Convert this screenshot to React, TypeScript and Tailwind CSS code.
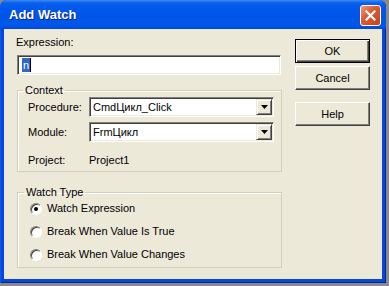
import type { ReactNode } from "react";

const sunken =
  "border border-t-[#808080] border-l-[#808080] border-b-white border-r-white shadow-[inset_1px_1px_0_#404040,inset_-1px_-1px_0_#ECE9D8]";

const ComboBox = ({ value }: { value: string }) => (
  <div className={`flex h-[20px] w-[185px] bg-white ${sunken}`}>
    <div className="flex flex-1 items-center pl-[3px] leading-[13px]">{value}</div>
    <div className="m-[1px] flex w-[16px] items-center justify-center border border-t-[#ECE9D8] border-l-[#ECE9D8] border-b-[#404040] border-r-[#404040] bg-[#ECE9D8] shadow-[inset_1px_1px_0_#fff,inset_-1px_-1px_0_#808080]">
      <svg width="7" height="4" viewBox="0 0 7 4">
        <path d="M0 0h7L3.5 4z" fill="#000" />
      </svg>
    </div>
  </div>
);

const Radio = ({ checked, children }: { checked?: boolean; children: ReactNode }) => (
  <div className="flex h-[23px] items-center pl-[12px]">
    <span className="flex h-[12px] w-[12px] items-center justify-center rounded-full border border-t-[#808080] border-l-[#808080] border-b-white border-r-white bg-white shadow-[inset_1px_1px_0_#404040]">
      {checked && <span className="h-[4px] w-[4px] rounded-full bg-black" />}
    </span>
    <span className="ml-[5px] leading-[13px]">{children}</span>
  </div>
);

const Button = ({ label, isDefault }: { label: string; isDefault?: boolean }) => (
  <button
    className={`flex h-[24px] w-[75px] items-center justify-center bg-[#ECE9D8] leading-[13px] ${
      isDefault
        ? "border border-black shadow-[inset_1px_1px_0_#fff,inset_-1px_-1px_0_#404040,inset_-2px_-2px_0_#808080]"
        : "border border-t-white border-l-white border-b-[#404040] border-r-[#404040] shadow-[inset_-1px_-1px_0_#808080]"
    }`}
  >
    {label}
  </button>
);

export default function App() {
  return (
    <div className="h-[286px] w-[389px] overflow-hidden bg-[#8a8a8a] font-['Liberation_Sans',Arial,sans-serif] text-[11px] text-black">
      <div className="flex h-[283px] w-[386px] flex-col overflow-hidden rounded-t-[7px] bg-[#0847D9] shadow-[inset_1px_0_0_#0A5CF0,inset_-1px_-1px_0_#0025A0]">
        {/* Title bar */}
        <div className="flex h-[29px] shrink-0 items-center justify-between bg-[linear-gradient(to_bottom,#3C8CF5_0px,#0A5FEA_3px,#0058EE_8px,#0055E5_55%,#0059EC_85%,#0048DA_100%)] pl-[9px] pr-[5px] pt-[1px]">
          <span className="text-[13px] font-bold leading-[16px] text-white [text-shadow:1px_1px_0_#0A1E8C]">
            Add Watch
          </span>
          <div className="flex h-[21px] w-[21px] items-center justify-center rounded-[3px] border border-white bg-[linear-gradient(135deg,#EC9A7C_0%,#DD5B34_40%,#C8421A_100%)]">
            <svg width="11" height="11" viewBox="0 0 11 11">
              <path d="M1.5 1.5l8 8M9.5 1.5l-8 8" stroke="#fff" strokeWidth="2.2" strokeLinecap="square" />
            </svg>
          </div>
        </div>

        {/* Body */}
        <div className="mx-[4px] mb-[4px] flex flex-1 bg-[#ECE9D8] pl-[12px]">
          <div className="flex w-[266px] flex-col pt-[7px]">
            <div className="leading-[13px]">Expression:</div>
            <div className={`ml-[1px] mt-[6px] flex h-[20px] w-[264px] items-center bg-white pl-[4px] ${sunken}`}>
              <span className="bg-[#316AC5] px-[1px] leading-[14px] text-white">n</span>
              <span className="h-[14px] w-[1px] bg-black" />
            </div>

            <fieldset className="ml-[1px] mt-[9px] w-[265px] border border-[#D0D0BF] pb-[4px] shadow-[inset_1px_1px_0_#fff]">
              <legend className="ml-[5px] px-[2px] leading-[13px]">Context</legend>
              <div className="grid grid-cols-[71px_185px] items-center gap-y-[5px]">
                <span className="pl-[10px] leading-[13px]">Procedure:</span>
                <ComboBox value="CmdЦикл_Click" />
                <span className="pl-[10px] leading-[13px]">Module:</span>
                <ComboBox value="FrmЦикл" />
                <span className="mt-[7px] pl-[10px] leading-[13px]">Project:</span>
                <span className="mt-[7px] leading-[13px]">Project1</span>
              </div>
            </fieldset>

            <fieldset className="ml-[1px] mt-[14px] w-[265px] border border-[#D0D0BF] pb-[1px] shadow-[inset_1px_1px_0_#fff]">
              <legend className="ml-[6px] px-[2px] leading-[13px]">Watch Type</legend>
              <div className="-mt-[2px] flex flex-col">
                <Radio checked>Watch Expression</Radio>
                <Radio>Break When Value Is True</Radio>
                <Radio>Break When Value Changes</Radio>
              </div>
            </fieldset>
          </div>

          {/* Buttons */}
          <div className="ml-[13px] flex flex-col pt-[10px]">
            <Button label="OK" isDefault />
            <div className="mt-[3px]">
              <Button label="Cancel" />
            </div>
            <div className="mt-[12px]">
              <Button label="Help" />
            </div>
          </div>
        </div>
      </div>
    </div>
  );
}
